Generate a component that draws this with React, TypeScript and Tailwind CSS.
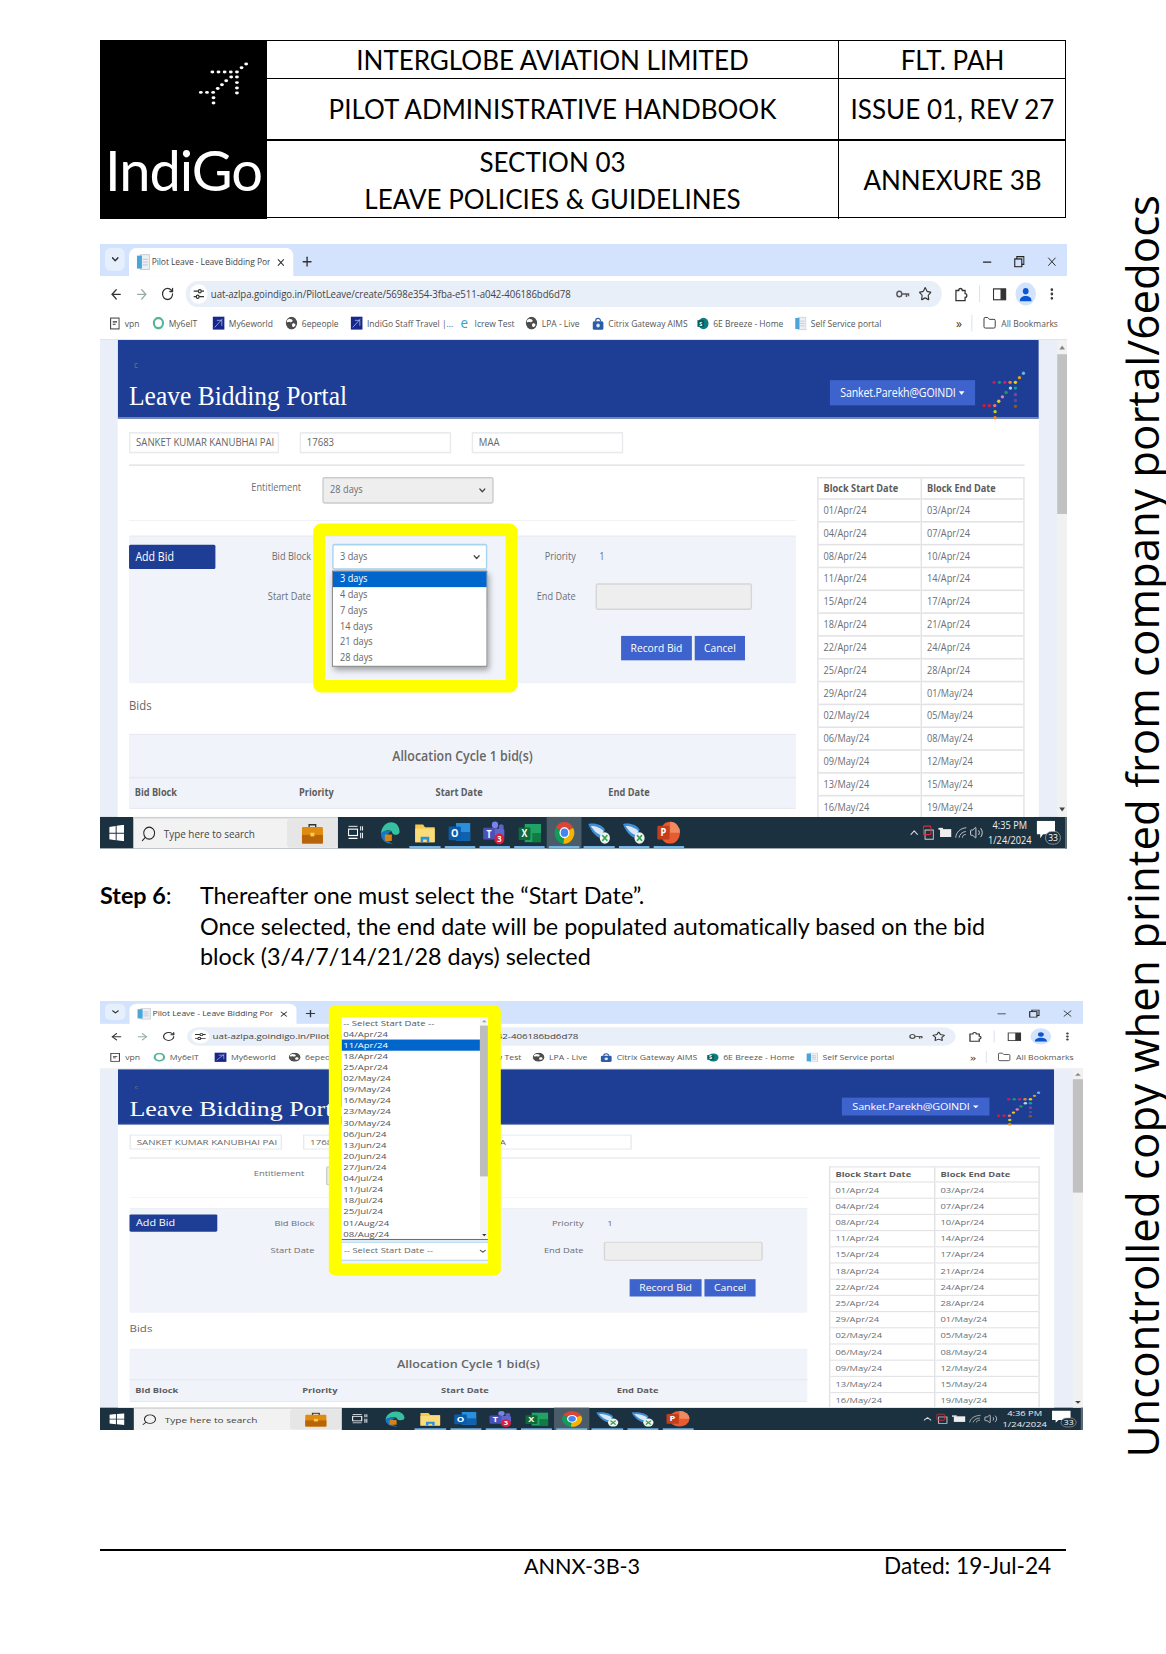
import {
  ArrowLeft,
  ArrowRight,
  ChevronDown,
  ChevronUp,
  EllipsisVertical,
  Folder,
  Minus,
  Plus,
  RotateCw,
  Search,
  Star,
  Volume2,
  X,
} from "lucide-react";
import type { ReactNode } from "react";

const planeDots: [number, number, string][] = [
  [1285, 398, "#5cb8e8"],
  [1273, 411, "#e89a1c"],
  [1197, 425, "#c81e5a"],
  [1213, 425, "#0d9a86"],
  [1229, 425, "#d01e78"],
  [1245, 425, "#ef8a17"],
  [1261, 425, "#e8cf1e"],
  [1246, 442, "#a8dcf0"],
  [1261, 442, "#12a090"],
  [1233, 455, "#1f9a55"],
  [1261, 461, "#8a3fa0"],
  [1222, 468, "#ee7ab0"],
  [1261, 479, "#5a4a9a"],
  [1211, 481, "#e8cf1e"],
  [1261, 496, "#8a5a2a"],
  [1167, 494, "#e8141e"],
  [1183, 494, "#d81e40"],
  [1199, 494, "#ee7a60"],
  [1200, 512, "#c8d020"],
  [1200, 530, "#ef8a17"],
];

function Plane({ mono, className }: { mono?: boolean; className: string }) {
  return (
    <svg viewBox="1157 388 138 152" preserveAspectRatio="none" className={className}>
      {planeDots.map(([x, y, c]) => (
        <circle key={`${x}-${y}`} cx={x} cy={y} r="5" fill={mono ? "#fff" : c} />
      ))}
    </svg>
  );
}

const bookmarks = [
  { label: "vpn", kind: "page", w: "w-[62px]" },
  { label: "My6eIT", kind: "ring", w: "w-[85px]" },
  { label: "My6eworld", kind: "indigo", w: "w-[103px]" },
  { label: "6epeople", kind: "globe", w: "w-[92px]" },
  { label: "IndiGo Staff Travel |...", kind: "indigo", w: "w-[152px]" },
  { label: "Icrew Test", kind: "ie", w: "w-[95px]" },
  { label: "LPA - Live", kind: "globe", w: "w-[94px]" },
  { label: "Citrix Gateway AIMS", kind: "citrix", w: "w-[148px]" },
  { label: "6E Breeze - Home", kind: "sp", w: "w-[138px]" },
  { label: "Self Service portal", kind: "doc", w: "w-[228px]" },
];

function BookmarkIcon({ kind }: { kind: string }) {
  if (kind === "page")
    return (
      <svg width="14" height="16" viewBox="0 0 14 16" fill="none" stroke="#333" strokeWidth="1.4">
        <rect x="1" y="1" width="12" height="14" />
        <path d="M4 6h6M4 9h4" />
      </svg>
    );
  if (kind === "ring")
    return (
      <svg width="17" height="17" viewBox="0 0 17 17" fill="none">
        <circle cx="8.5" cy="8.5" r="6.5" stroke="#55b59b" strokeWidth="3" />
      </svg>
    );
  if (kind === "indigo")
    return (
      <svg width="17" height="17" viewBox="0 0 17 17">
        <rect width="17" height="17" fill="#17288a" />
        <path d="M3 14 14 3M6 5h7v7" stroke="#b8c4f0" strokeWidth="1" fill="none" />
      </svg>
    );
  if (kind === "globe")
    return (
      <svg width="17" height="17" viewBox="0 0 17 17">
        <circle cx="8.5" cy="8.5" r="8" fill="#4d4d4d" />
        <path d="M5 3c2 1 4 0 5 2s-3 3-4 2-3 1-4 0 1-3 3-4Zm5 6c2-1 4 0 4 2s-3 3-4 2-1-3 0-4Z" fill="#fff" />
      </svg>
    );
  if (kind === "ie")
    return <span className="text-[19px] leading-none text-[#3aa0c8]">e</span>;
  if (kind === "citrix")
    return (
      <svg width="17" height="18" viewBox="0 0 17 18">
        <path d="M5 6a3.5 3.5 0 0 1 7 0" fill="none" stroke="#2a5ca8" strokeWidth="1.6" />
        <rect x="1" y="6" width="15" height="11" rx="2" fill="#2a5ca8" />
        <circle cx="8.5" cy="11.5" r="2.5" fill="#dbe7f7" />
      </svg>
    );
  if (kind === "sp")
    return (
      <svg width="20" height="18" viewBox="0 0 20 18">
        <circle cx="11" cy="9" r="8.5" fill="#0b7d7d" />
        <rect x="1" y="4" width="11" height="10" fill="#075e5e" />
        <text x="6.5" y="12.5" fontSize="9" fontWeight="700" fill="#fff" textAnchor="middle">S</text>
      </svg>
    );
  return (
    <svg width="17" height="18" viewBox="0 0 17 18">
      <rect x="5" y="1" width="11" height="16" fill="#eceff3" stroke="#c4cad2" />
      <rect x="1" y="2" width="6" height="14" fill="#4aa5d8" />
      <path d="M8 6h6M8 9h6M8 12h6" stroke="#bbc2cc" />
    </svg>
  );
}

const blockRows = [
  ["01/Apr/24", "03/Apr/24"],
  ["04/Apr/24", "07/Apr/24"],
  ["08/Apr/24", "10/Apr/24"],
  ["11/Apr/24", "14/Apr/24"],
  ["15/Apr/24", "17/Apr/24"],
  ["18/Apr/24", "21/Apr/24"],
  ["22/Apr/24", "24/Apr/24"],
  ["25/Apr/24", "28/Apr/24"],
  ["29/Apr/24", "01/May/24"],
  ["02/May/24", "05/May/24"],
  ["06/May/24", "08/May/24"],
  ["09/May/24", "12/May/24"],
  ["13/May/24", "15/May/24"],
  ["16/May/24", "19/May/24"],
];

const startDates = [
  "-- Select Start Date --",
  "04/Apr/24",
  "11/Apr/24",
  "18/Apr/24",
  "25/Apr/24",
  "02/May/24",
  "09/May/24",
  "16/May/24",
  "23/May/24",
  "30/May/24",
  "06/Jun/24",
  "13/Jun/24",
  "20/Jun/24",
  "27/Jun/24",
  "04/Jul/24",
  "11/Jul/24",
  "18/Jul/24",
  "25/Jul/24",
  "01/Aug/24",
  "08/Aug/24",
];

function FieldBox({ value, w }: { value: string; w: string }) {
  return (
    <div className={`flex h-[27px] items-center overflow-hidden whitespace-nowrap border-2 border-[#e9eaee] bg-white pl-[8px] text-[13.5px] text-[#666] ${w}`}>
      {value}
    </div>
  );
}

function SelectBox({ value, h }: { value: string; h: string }) {
  return (
    <div className={`flex w-[219px] items-center justify-between rounded-[3px] border-2 border-[#a9d4ef] bg-white pl-[9px] pr-[6px] text-[13px] text-[#666] ${h}`}>
      <span className="whitespace-nowrap">{value}</span>
      <ChevronDown size={14} strokeWidth={3} className="text-[#444]" />
    </div>
  );
}

function TaskIcon({ children, active, line }: { children: ReactNode; active?: boolean; line?: boolean }) {
  return (
    <div className={`relative flex h-full w-[49.2px] items-center justify-center ${active ? "bg-[#4a5c68]" : ""}`}>
      {children}
      {line && <div className="absolute inset-x-[3px] bottom-0 h-[3px] bg-[#76b9ed]" />}
    </div>
  );
}

function WingIcon() {
  return (
    <svg width="34" height="29" viewBox="0 0 38 32">
      <path d="M2 3c10-2 22 1 26 8l-4 12C16 24 6 14 2 3Z" fill="#3f8fd8" />
      <path d="M6 6c8 0 16 3 20 7l-3 6C16 18 10 12 6 6Z" fill="#d8e8f6" />
      <circle cx="28" cy="23" r="8" fill="#f2f2f2" />
      <path d="M24 19l8 8M32 19l-8 8" stroke="#2fa84f" strokeWidth="2.4" />
    </svg>
  );
}

function TrayIcon({ children }: { children: ReactNode }) {
  return <div className="flex w-[22px] items-center justify-center">{children}</div>;
}

function Taskbar({ time }: { time: string }) {
  return (
    <div className="flex h-[40px] items-center bg-[#1c3140] text-white">
      <div className="flex h-full w-[47px] items-center justify-center">
        <svg width="21" height="21" viewBox="0 0 23 23" fill="#fff">
          <path d="M0 3l10-1.4V11H0Zm11.5-1.6L23 0v11H11.5ZM0 12.5h10v9L0 20Zm11.5 0H23V23l-11.5-1.6Z" />
        </svg>
      </div>
      <div className="flex h-full w-[289px] items-center border-t-2 border-[#cfd2d4] bg-[#f2f2f2] pl-[10px] text-[14px] text-[#444]">
        <Search size={23} strokeWidth={1.5} className="-scale-x-100 text-[#222]" />
        <span className="ml-[10px] w-[165px] whitespace-nowrap">Type here to search</span>
        <div className="ml-[9px] flex h-[36px] w-[71px] items-center justify-center rounded-[5px] bg-[#e6e6e6]">
          <svg width="30" height="26" viewBox="0 0 32 28">
            <path d="M11 6V2h10v4" fill="none" stroke="#333" strokeWidth="2" />
            <rect y="5" width="32" height="23" rx="2" fill="#e08a10" />
            <rect y="16" width="32" height="12" fill="#b8650a" />
            <rect x="13" y="13" width="6" height="5" fill="#f5d04a" />
          </svg>
        </div>
      </div>
      <TaskIcon>
        <svg width="22" height="18" viewBox="0 0 24 20" fill="none" stroke="#fff" strokeWidth="1.6">
          <rect x="1" y="5" width="14" height="9" />
          <path d="M1 1h14M1 18h14M20 1v6M20 10v8M23 1v6M23 10v8" />
        </svg>
      </TaskIcon>
      <TaskIcon>
        <svg width="29" height="29" viewBox="0 0 32 32">
          <path d="M2 17C3 7 10 1 18 1c8 0 13 6 13 13 0 4-5 5-9 4-3-1-2-4-4-5-6-2-11 0-16 4Z" fill="#35c1a0" />
          <path d="M2 17c4-5 12-6 16-3-5 1-7 6-5 11 1 3 4 5 8 6C10 32 2 26 2 17Z" fill="#1477c8" />
          <rect x="8" y="18" width="11" height="9" rx="1" fill="#d78414" />
        </svg>
      </TaskIcon>
      <TaskIcon line>
        <svg width="28" height="26" viewBox="0 0 32 30">
          <path d="M0 3h13l3 4h16v22H0Z" fill="#f6c94f" />
          <rect y="9" width="32" height="20" fill="#fbdc7b" />
          <path d="M9 29v-8h14v8h-4v-4h-6v4Z" fill="#2f8fd8" />
        </svg>
      </TaskIcon>
      <TaskIcon line>
        <svg width="32" height="28" viewBox="0 0 36 32">
          <rect x="12" y="2" width="23" height="26" fill="#2a8fdc" />
          <rect x="12" y="15" width="23" height="13" fill="#0f62b0" />
          <rect y="7" width="20" height="20" rx="2" fill="#0a5cab" />
          <text x="10" y="22" fontSize="15" fontWeight="700" fill="#fff" textAnchor="middle">O</text>
        </svg>
      </TaskIcon>
      <TaskIcon line>
        <svg width="32" height="30" viewBox="0 0 36 34">
          <circle cx="19" cy="6" r="5" fill="#7b83eb" />
          <circle cx="29" cy="9" r="4" fill="#5a62c8" />
          <rect x="12" y="11" width="22" height="15" rx="3" fill="#5f67cf" />
          <rect y="10" width="19" height="17" rx="2" fill="#4a52b8" />
          <text x="9.5" y="24" fontSize="14" fontWeight="700" fill="#fff" textAnchor="middle">T</text>
          <circle cx="26" cy="26" r="8" fill="#d8203c" />
          <text x="26" y="30.5" fontSize="12" fontWeight="700" fill="#fff" textAnchor="middle">3</text>
        </svg>
      </TaskIcon>
      <TaskIcon line>
        <svg width="32" height="27" viewBox="0 0 36 30">
          <rect x="10" y="2" width="26" height="26" fill="#21a366" />
          <rect x="22" y="15" width="14" height="13" fill="#107c41" />
          <rect y="7" width="19" height="18" rx="2" fill="#0e6a38" />
          <text x="9.5" y="21" fontSize="14" fontWeight="700" fill="#fff" textAnchor="middle">X</text>
        </svg>
      </TaskIcon>
      <TaskIcon active line>
        <svg width="30" height="30" viewBox="0 0 34 34">
          <path d="M17 17 3 10a16 16 0 0 1 28 0Z" fill="#db4437" />
          <path d="M17 17 31 10a16 16 0 0 1-16 23Z" fill="#f4b400" />
          <path d="M17 17 15 33A16 16 0 0 1 3 10Z" fill="#0f9d58" />
          <circle cx="17" cy="17" r="8" fill="#fff" />
          <circle cx="17" cy="17" r="6" fill="#4285f4" />
        </svg>
      </TaskIcon>
      <TaskIcon line>
        <WingIcon />
      </TaskIcon>
      <TaskIcon line>
        <WingIcon />
      </TaskIcon>
      <TaskIcon line>
        <svg width="33" height="30" viewBox="0 0 38 34">
          <circle cx="21" cy="17" r="16" fill="#e85a30" />
          <path d="M21 1a16 16 0 0 1 16 16H21Z" fill="#f08a60" />
          <rect y="7" width="20" height="20" rx="2" fill="#c43e1c" />
          <text x="10" y="22.5" fontSize="15" fontWeight="700" fill="#fff" textAnchor="middle">P</text>
        </svg>
      </TaskIcon>
      <div className="ml-auto flex h-full items-center">
        <TrayIcon>
          <ChevronUp size={18} className="text-[#ddd]" />
        </TrayIcon>
        <TrayIcon>
          <svg width="20" height="20" viewBox="0 0 24 24" fill="none" strokeWidth="1.6">
            <rect x="4" y="8" width="14" height="14" stroke="#ccc" />
            <rect x="1" y="2" width="13" height="13" rx="2" stroke="#d8303c" />
          </svg>
        </TrayIcon>
        <TrayIcon>
          <svg width="20" height="15" viewBox="0 0 24 18" fill="#eee">
            <rect x="3" y="3" width="19" height="12" />
            <rect y="1" width="8" height="3" />
          </svg>
        </TrayIcon>
        <TrayIcon>
          <svg width="19" height="16" viewBox="0 0 24 20" fill="none" stroke="#ddd" strokeWidth="1.4">
            <path d="M2 18C3 9 10 3 21 2M8 18c1-5 5-9 12-10M14 18c0-3 2-5 6-5" />
          </svg>
        </TrayIcon>
        <TrayIcon>
          <Volume2 size={20} strokeWidth={1.5} className="text-[#ddd]" />
        </TrayIcon>
        <div className="flex w-[72px] flex-col items-center text-[13px] leading-[19px] text-[#eee]">
          <span>{time}</span>
          <span>1/24/2024</span>
        </div>
        <div className="relative ml-[2px] mr-[6px] h-[30px] w-[34px]">
          <svg width="26" height="22" viewBox="0 0 26 22" fill="#fff">
            <path d="M0 0h26v17H9l-4 5v-5H0Z" />
          </svg>
          <span className="absolute bottom-0 right-0 rounded-full border border-[#aaa] bg-[#1c3140] px-[3px] text-[12px] leading-[15px] text-white">33</span>
        </div>
        <div className="h-full w-[3px] bg-[#5d6a74]" />
      </div>
    </div>
  );
}

function BrowserChrome() {
  return (
    <>
      <div className="flex h-[41px] items-end bg-[#d3e3fd] pl-[7px] pr-[12px]">
        <div className="mb-[7px] flex h-[29px] w-[28px] items-center justify-center rounded-[8px] bg-[#e6effc]">
          <ChevronDown size={15} strokeWidth={3} className="text-[#333]" />
        </div>
        <div className="ml-[6px] flex h-[36px] w-[232px] items-center rounded-t-[10px] bg-white pl-[10px] text-[12px] tracking-[-0.1px] text-[#444]">
          <svg width="20" height="22" viewBox="0 0 17 18">
            <rect x="5" y="1" width="11" height="16" fill="#eceff3" stroke="#c4cad2" />
            <rect x="1" y="2" width="6" height="14" fill="#4aa5d8" />
            <path d="M8 6h6M8 9h6M8 12h6" stroke="#bbc2cc" />
          </svg>
          <span className="ml-[2px] w-[167px] overflow-hidden whitespace-nowrap">Pilot Leave - Leave Bidding Portal</span>
          <X size={15} strokeWidth={2.4} className="ml-[8px] text-[#333]" />
        </div>
        <Plus size={19} strokeWidth={2.4} className="mb-[9px] ml-[10px] text-[#333]" />
        <div className="mb-[9px] ml-auto flex items-center gap-[29px] text-[#222]">
          <Minus size={18} />
          <svg width="15" height="15" viewBox="0 0 15 15" fill="none" stroke="#222" strokeWidth="1.6">
            <rect x="1" y="4" width="10" height="10" />
            <path d="M4 4V1h10v10h-3" />
          </svg>
          <X size={19} strokeWidth={1.6} />
        </div>
      </div>
      <div className="flex h-[45px] items-center bg-white pl-[13px] pr-[12px] text-[#333]">
        <ArrowLeft size={20} strokeWidth={2.2} />
        <ArrowRight size={20} strokeWidth={2.2} className="ml-[16px] text-[#9aa]" />
        <RotateCw size={19} strokeWidth={2.2} className="ml-[17px]" />
        <div className="ml-[16px] flex h-[33px] w-[1077px] items-center rounded-full bg-[#e9eff8] pl-[6px] pr-[14px]">
          <div className="flex h-[25px] w-[25px] items-center justify-center rounded-full bg-white">
            <svg width="15" height="13" viewBox="0 0 15 13" fill="none" stroke="#333" strokeWidth="1.6">
              <path d="M0 3h7M11 3h4M0 10h4M8 10h7" />
              <circle cx="9" cy="3" r="2" />
              <circle cx="6" cy="10" r="2" />
            </svg>
          </div>
          <span className="ml-[5px] whitespace-nowrap text-[13.6px] tracking-[-0.1px] text-[#444]">
            uat-azlpa.goindigo.in/PilotLeave/create/5698e354-3fba-e511-a042-406186bd6d78
          </span>
          <svg width="20" height="11" viewBox="0 0 20 11" fill="none" stroke="#555" strokeWidth="2" className="ml-auto">
            <circle cx="5" cy="5.5" r="3.5" />
            <path d="M9 5.5h10M15 5.5v4M18 5.5v3" />
          </svg>
          <Star size={19} strokeWidth={2} className="ml-[12px]" />
        </div>
        <svg width="20" height="20" viewBox="0 0 20 20" fill="none" stroke="#333" strokeWidth="1.8" className="ml-[17px]">
          <path d="M3 5h4a2.5 2.5 0 0 1 5 0h4v4a2.5 2.5 0 0 1 0 5v4H3Z" />
        </svg>
        <div className="ml-[16px] h-[21px] w-px bg-[#c9d6ea]" />
        <svg width="20" height="16" viewBox="0 0 20 16" className="ml-[18px]">
          <rect x="1" y="1" width="18" height="14" fill="#fff" stroke="#333" strokeWidth="1.6" />
          <rect x="11" y="1" width="8" height="14" fill="#333" />
        </svg>
        <div className="ml-[13px] flex h-[29px] w-[29px] items-center justify-center rounded-full bg-[#d3e3fd]">
          <svg width="17" height="18" viewBox="0 0 17 18" fill="#0b57d0">
            <circle cx="8.5" cy="5" r="4" />
            <path d="M0 18c0-5 4-7 8.5-7s8.5 2 8.5 7Z" />
          </svg>
        </div>
        <EllipsisVertical size={19} strokeWidth={2.6} className="ml-[13px]" />
      </div>
      <div className="flex h-[36px] items-center border-b border-[#dadce0] bg-white pb-[6px] pl-[12px] text-[12px] text-[#555]">
        {bookmarks.map((b) => (
          <div key={b.label} className={`flex items-center gap-[6px] whitespace-nowrap ${b.w}`}>
            <div className="flex w-[17px] justify-center">
              <BookmarkIcon kind={b.kind} />
            </div>
            <span>{b.label}</span>
          </div>
        ))}
        <span className="w-[22px] text-[17px] text-[#333]">»</span>
        <div className="h-[21px] w-px bg-[#c9d6ea]" />
        <Folder size={19} strokeWidth={1.6} className="ml-[15px] text-[#333]" />
        <span className="ml-[7px] whitespace-nowrap">All Bookmarks</span>
      </div>
    </>
  );
}

function Scrollbar() {
  return (
    <div className="flex w-[14px] flex-col items-center bg-[#f1f1f1]">
      <div className="mt-[7px] h-0 w-0 border-x-[4px] border-b-[5px] border-x-transparent border-b-[#888]" />
      <div className="mt-[6px] h-[203px] w-full bg-[#c1c1c1]" />
      <div className="mb-[7px] mt-auto h-0 w-0 border-x-[4px] border-t-[5px] border-x-transparent border-t-[#444]" />
    </div>
  );
}

function PortalBody({ startValue }: { startValue: string }) {
  return (
    <div className="flex h-[606px] bg-[#e9eef8]">
      <div className="w-[25px]" />
      <div className="flex w-[1301px] flex-col overflow-hidden bg-white text-[#6a6e75]">
        <div className="flex h-[100px] shrink-0 border-b-2 border-[#7e90c0] bg-[#1e3e96] pl-[16px]">
          <div className="w-[310px] shrink-0">
            <div className="mt-[24px] pl-[7px] text-[11px] leading-[14px] text-[#777]">c</div>
            <div className="mt-[11px] whitespace-nowrap font-['Liberation_Serif',serif] text-[36px] leading-[44px] text-white">
              Leave Bidding Portal
            </div>
          </div>
          <div className="ml-[680px] mt-[51px] flex h-[32px] w-[205px] shrink-0 items-center justify-center gap-[5px] bg-[#3f63cc] text-[15px] tracking-[-0.2px] text-white">
            Sanket.Parekh@GOINDI
            <span className="h-0 w-0 border-x-[4px] border-t-[5px] border-x-transparent border-t-white" />
          </div>
          <Plane className="ml-[8px] mt-[38px] h-[65px] w-[65px] shrink-0" />
        </div>

        <div className="flex flex-col pl-[16px]">
          <div className="mt-[17px] flex">
            <FieldBox value="SANKET KUMAR KANUBHAI PAI" w="w-[212px]" />
            <FieldBox value="17683" w="ml-[29px] w-[214px]" />
            <FieldBox value="MAA" w="ml-[29px] w-[214px]" />
          </div>
          <div className="mt-[14px] h-[2px] w-[1265px] bg-[#e3e5ea]" />

          <div className="mt-[14px] flex">
            <div className="w-[942px]">
              <div className="flex h-[34px] items-center">
                <div className="w-[243px] pb-[6px] text-right text-[13px]">Entitlement</div>
                <div className="ml-[30px] flex h-[34px] w-[242px] items-center justify-between rounded-[3px] border-2 border-[#ccc] bg-[#eee] pl-[9px] pr-[7px] text-[13px]">
                  28 days
                  <ChevronDown size={14} strokeWidth={3} className="text-[#444]" />
                </div>
              </div>
              <div className="mt-[21px] h-px bg-[#eceef2]" />
              <div className="mt-[18px] h-[188px] rounded-[2px] border-t-2 border-[#e6e9ef] bg-[#f0f3f9] pt-[9px] text-[13px]">
                <div className="flex h-[33px] items-center">
                  <div className="flex h-[31px] w-[122px] items-center rounded-[2px] bg-[#1e3e96] pl-[9px] text-[15px] text-white">
                    Add Bid
                  </div>
                  <div className="w-[135px] text-right">Bid Block</div>
                  <div className="ml-[30px]">
                    <SelectBox value="3 days" h="h-[33px]" />
                  </div>
                  <div className="w-[125px] text-right">Priority</div>
                  <div className="ml-[33px]">1</div>
                </div>
                <div className="mt-[17px] flex h-[34px] items-center">
                  <div className="ml-[122px] w-[135px] text-right">Start Date</div>
                  <div className="ml-[30px]">
                    <SelectBox value={startValue} h="h-[34px]" />
                  </div>
                  <div className="w-[125px] text-right">End Date</div>
                  <div className="ml-[28px] h-[34px] w-[221px] rounded-[3px] border-2 border-[#d6d6d6] bg-[#eee]" />
                </div>
                <div className="ml-[695px] mt-[33px] flex gap-[4px] text-[14.5px] text-white">
                  <div className="flex h-[31px] w-[100px] items-center justify-center bg-[#3f63cc]">Record Bid</div>
                  <div className="flex h-[31px] w-[71px] items-center justify-center bg-[#3f63cc]">Cancel</div>
                </div>
              </div>
              <div className="mt-[17px] text-[16px] leading-[22px] text-[#666]">Bids</div>
              <div className="mt-[25px] rounded-[2px] border-y-2 border-[#e6e9ef] bg-[#f0f3f9]">
                <div className="flex h-[55px] items-center justify-center border-b-2 border-[#e6e9ef] text-[17.5px] font-semibold text-[#666]">
                  Allocation Cycle 1 bid(s)
                </div>
                <div className="grid h-[37px] grid-cols-[232px_193px_244px_1fr] items-center pl-[8px] text-[13px] font-bold text-[#5c5c5c]">
                  <span>Bid Block</span>
                  <span>Priority</span>
                  <span>Start Date</span>
                  <span>End Date</span>
                </div>
              </div>
            </div>

            <div className="ml-[30px] w-[293px] border-l-2 border-r-2 border-t-2 border-[#e3e3e6] text-[13px]">
              <div className="grid h-[27px] grid-cols-[144px_1fr] items-center border-b-2 border-[#e3e3e6] font-bold text-[#5c5c5c]">
                <span className="pl-[7px]">Block Start Date</span>
                <span className="h-full border-l-2 border-[#e3e3e6] pl-[7px] leading-[25px]">Block End Date</span>
              </div>
              {blockRows.map(([start, end]) => (
                <div key={start} className="grid h-[29px] grid-cols-[144px_1fr] items-center border-b-2 border-[#e3e3e6]">
                  <span className="pl-[7px]">{start}</span>
                  <span className="h-full border-l-2 border-[#e3e3e6] pl-[7px] leading-[27px]">{end}</span>
                </div>
              ))}
            </div>
          </div>
        </div>
      </div>
      <div className="w-[26px]" />
      <Scrollbar />
    </div>
  );
}

function Screen({ time, startValue, children }: { time: string; startValue: string; children: ReactNode }) {
  return (
    <>
      <BrowserChrome />
      <PortalBody startValue={startValue} />
      <Taskbar time={time} />
      {children}
    </>
  );
}

function BidBlockPopup() {
  return (
    <>
      <div className="absolute left-[301px] top-[355px] h-[215px] w-[289px] rounded-[11px] border-x-[17px] border-y-[16px] border-[#ffff00]" />
      <div className="absolute left-[328px] top-[415px] w-[219px] border border-[#666] bg-white text-[13px] text-[#666] shadow-[3px_4px_8px_rgba(0,0,0,0.35)]">
        {["3 days", "4 days", "7 days", "14 days", "21 days", "28 days"].map((d, i) => (
          <div key={d} className={`flex h-[20px] items-center pl-[10px] ${i === 0 ? "bg-[#0066cc] text-white" : ""}`}>
            {d}
          </div>
        ))}
      </div>
    </>
  );
}

function StartDatePopup() {
  return (
    <div className="absolute left-[318px] top-[7px] h-[485px] w-[239px] rounded-[11px] border-x-[18px] border-y-[22px] border-[#ffff00]">
      <div className="flex h-[399px] border-b-2 border-[#4a7a8c] bg-white text-[13.3px] leading-[20px] text-[#555]">
        <div className="flex-1">
          {startDates.map((d, i) => (
            <div key={d} className={`h-[19.9px] whitespace-nowrap pl-[2px] ${i === 2 ? "bg-[#0066cc] text-white" : ""}`}>
              {d}
            </div>
          ))}
        </div>
        <div className="flex w-[11px] flex-col items-center bg-[#f4f4f4]">
          <div className="mt-[5px] h-0 w-0 border-x-[3px] border-b-[4px] border-x-transparent border-b-[#999]" />
          <div className="mt-[6px] h-[270px] w-full bg-[#bdbdbd]" />
          <div className="mb-[5px] mt-auto h-0 w-0 border-x-[3px] border-t-[4px] border-x-transparent border-t-[#333]" />
        </div>
      </div>
    </div>
  );
}

export default function App() {
  return (
    <div className="relative h-[1654px] w-[1166px] overflow-hidden bg-white pl-[100px] pt-[40px] font-['Lato',sans-serif] text-black [font-variant-ligatures:none]">
      <div className="grid h-[178px] w-[966px] grid-cols-[167px_571px_228px] grid-rows-[38px_62px_78px] border-b border-r border-t border-black text-[26px] leading-none">
        <div className="row-span-3 flex flex-col bg-black pl-[5px] text-white">
          <Plane mono className="ml-[92px] mt-[20px] h-[45px] w-[53px]" />
          <div className="mt-[34px] text-[56px] leading-[60px] tracking-[-1px]">IndiGo</div>
        </div>
        <div className="flex items-center justify-center border-b border-black">INTERGLOBE AVIATION LIMITED</div>
        <div className="flex items-center justify-center border-b border-l border-black">FLT. PAH</div>
        <div className="flex items-center justify-center border-b-2 border-black">PILOT ADMINISTRATIVE HANDBOOK</div>
        <div className="flex items-center justify-center border-b-2 border-l border-black">ISSUE 01, REV 27</div>
        <div className="flex flex-col items-center justify-center gap-[11px]">
          <span>SECTION 03</span>
          <span>LEAVE POLICIES &amp; GUIDELINES</span>
        </div>
        <div className="flex items-center justify-center border-l border-black">ANNEXURE 3B</div>
      </div>

      <div className="mt-[26px] h-[605px] w-[967px] overflow-hidden">
        <div className="relative h-[768px] w-[1366px] origin-top-left scale-x-[0.708] scale-y-[0.787] font-['Open_Sans',sans-serif]">
          <Screen time="4:35 PM" startValue="-- Select Start Date --">
            <BidBlockPopup />
          </Screen>
        </div>
      </div>

      <div className="mt-[31px] flex text-[23.35px] leading-[30.5px]">
        <div className="w-[100px]">
          <b>Step 6</b>:
        </div>
        <div className="w-[820px]">
          <p>Thereafter one must select the “Start Date”.</p>
          <p>Once selected, the end date will be populated automatically based on the bid block (3/4/7/14/21/28 days) selected</p>
        </div>
      </div>

      <div className="mt-[29px] h-[429px] w-[983px] overflow-hidden">
        <div className="relative h-[768px] w-[1366px] origin-top-left scale-x-[0.7196] scale-y-[0.5586] font-['Open_Sans',sans-serif]">
          <Screen time="4:36 PM" startValue="-- Select Start Date --">
            <StartDatePopup />
          </Screen>
        </div>
      </div>

      <div className="mt-[119px] flex w-[966px] whitespace-nowrap border-t-2 border-black text-[22.6px] leading-[30px]">
        <span className="ml-[424px] w-[360px] text-[21.6px]">ANNX-3B-3</span>
        <span>Dated: 19-Jul-24</span>
      </div>

      <div className="absolute left-[1116px] top-[195px] rotate-180 whitespace-nowrap font-['Open_Sans',sans-serif] text-[43.8px] leading-[52px] [writing-mode:vertical-rl]">
        Uncontrolled copy when printed from company portal/6edocs
      </div>
    </div>
  );
}
